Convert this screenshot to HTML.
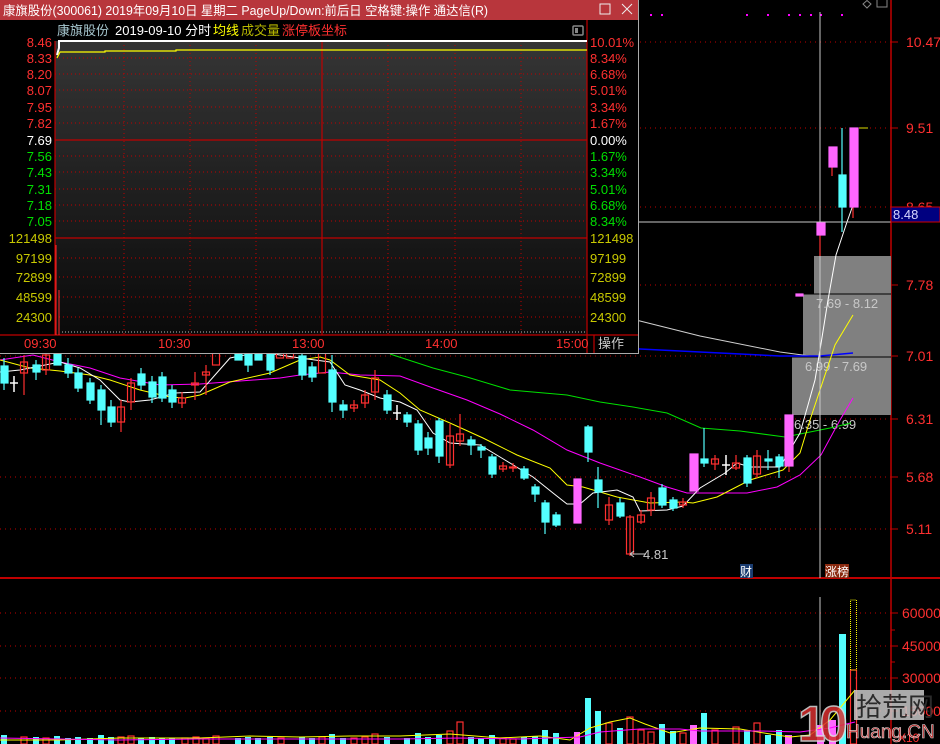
<!DOCTYPE html>
<html><head><meta charset="utf-8"><style>
html,body{margin:0;padding:0;background:#000;width:940px;height:744px;overflow:hidden}
svg{display:block}
text{font-family:"Liberation Sans","Noto Sans CJK SC",sans-serif}
</style></head><body>
<svg width="940" height="744" viewBox="0 0 940 744" xmlns="http://www.w3.org/2000/svg">
<rect width="940" height="744" fill="#000"/>
<g stroke="#c00000" stroke-width="1" stroke-dasharray="1,4">
<line x1="0" y1="42" x2="891" y2="42"/><line x1="0" y1="128" x2="891" y2="128"/>
<line x1="0" y1="207" x2="891" y2="207"/><line x1="0" y1="285" x2="891" y2="285"/>
<line x1="0" y1="356" x2="891" y2="356"/><line x1="0" y1="419" x2="891" y2="419"/>
<line x1="0" y1="477" x2="891" y2="477"/><line x1="0" y1="529" x2="891" y2="529"/>
<line x1="0" y1="613" x2="891" y2="613"/><line x1="0" y1="646" x2="891" y2="646"/>
<line x1="0" y1="678" x2="891" y2="678"/><line x1="0" y1="711" x2="891" y2="711"/>
</g>
<line x1="891" y1="0" x2="891" y2="744" stroke="#c00000" stroke-width="1.5"/>
<line x1="0" y1="578" x2="940" y2="578" stroke="#c00000" stroke-width="2"/>
<g stroke="#c00000"><line x1="891" y1="42" x2="898" y2="42"/><line x1="891" y1="128" x2="898" y2="128"/><line x1="891" y1="285" x2="898" y2="285"/><line x1="891" y1="356" x2="898" y2="356"/><line x1="891" y1="419" x2="898" y2="419"/><line x1="891" y1="477" x2="898" y2="477"/><line x1="891" y1="529" x2="898" y2="529"/><line x1="891" y1="613" x2="898" y2="613"/><line x1="891" y1="630" x2="895" y2="630"/><line x1="891" y1="646" x2="898" y2="646"/><line x1="891" y1="662" x2="895" y2="662"/><line x1="891" y1="678" x2="898" y2="678"/><line x1="891" y1="711" x2="898" y2="711"/></g>
<g fill="#ff3030" font-size="14">
<text x="906" y="47">10.47</text><text x="906" y="133">9.51</text><text x="906" y="212">8.65</text>
<text x="906" y="290">7.78</text><text x="906" y="361">7.01</text><text x="906" y="424">6.31</text>
<text x="906" y="482">5.68</text><text x="906" y="534">5.11</text>
<text x="902" y="618">60000</text><text x="902" y="651">45000</text><text x="902" y="683">30000</text><text x="902" y="716">15000</text>
<text x="898" y="742" font-size="12">X10</text>
</g>
<line x1="859" y1="128" x2="868" y2="128" stroke="#dddd00"/>
<line x1="886" y1="285" x2="891" y2="285" stroke="#00ff00"/>
<g fill="#ff00ff"><rect x="650" y="14" width="2" height="2"/><rect x="661" y="14" width="2" height="2"/><rect x="746" y="14" width="2" height="2"/><rect x="767" y="14" width="2" height="2"/><rect x="788" y="14" width="2" height="2"/><rect x="799" y="14" width="2" height="2"/><rect x="810" y="14" width="2" height="2"/><rect x="820" y="14" width="2" height="2"/><rect x="841" y="14" width="2" height="2"/></g>
<path d="M863 4 L867 0.5 L871 4 L867 8Z" fill="none" stroke="#888"/>
<rect x="877" y="-2" width="10" height="9" fill="none" stroke="#888"/>
<rect x="814" y="256" width="77" height="38" fill="#808080"/>
<rect x="803" y="294" width="88" height="63" fill="#808080"/>
<rect x="792" y="357" width="99" height="58" fill="#808080"/>
<line x1="803" y1="294" x2="891" y2="294" stroke="#000"/>
<line x1="792" y1="357" x2="891" y2="357" stroke="#000"/>
<g fill="#c8c8c8" font-size="13"><text x="816" y="308">7.69 - 8.12</text><text x="805" y="371">6.99 - 7.69</text><text x="794" y="429">6.35 - 6.99</text></g>
<polyline points="600,312 640,321 700,336 780,352 810,356" fill="none" stroke="#d0d0d0"/>
<polyline points="600,347 640,349 700,352 780,356 820,356 853,353" fill="none" stroke="#0000ff" stroke-width="1.5"/>
<polyline points="390,354 433,368 467,377 510,390 567,395 600,402 633,407 667,413 701,428 740,431 785,437 800,434 830,428 851,423" fill="none" stroke="#00e000"/>
<polyline points="0,360 33,355 60,362 90,368 120,378 160,385 200,384 240,381 280,378 300,375 330,372 360,375 400,376 433,388 467,400 500,414 533,430 567,450 600,463 640,477 667,487 687,493 747,493 777,487 800,475 821,455 840,420 853,398" fill="none" stroke="#ff00ff"/>
<polyline points="0,360 30,368 60,371 90,375 110,380 140,390 170,397 185,398 200,395 230,382 270,373 300,360 320,357 330,360 350,375 380,380 400,393 420,410 450,423 483,438 517,455 550,468 567,485 583,487 617,497 650,503 683,502 693,503 717,497 750,480 783,470 800,453 810,420 820,390 835,345 853,315" fill="none" stroke="#ffff00"/>
<polyline points="0,372 20,370 40,366 60,362 80,368 100,380 120,400 130,402 150,400 175,393 200,392 215,375 230,358 260,352 300,358 315,360 330,362 345,385 360,390 380,398 400,402 417,410 433,433 450,443 480,445 500,457 533,477 553,493 567,504 580,504 593,493 617,490 633,497 640,511 667,510 683,506 700,488 725,473 737,463 750,467 780,467 800,433 808,405 815,380 820,350 828,300 836,255 847,222 853,205" fill="none" stroke="#ffffff"/>
<line x1="0" y1="222" x2="891" y2="222" stroke="#c8c8c8"/>
<line x1="820" y1="12" x2="820" y2="578" stroke="#c8c8c8"/>
<line x1="820" y1="597" x2="820" y2="744" stroke="#c8c8c8"/>
<rect x="891" y="207" width="49" height="15" fill="#000080" stroke="#d00000"/>
<text x="893" y="219" fill="#d8d8ff" font-size="13">8.48</text>
<g stroke-width="1.2">
<g stroke="#54ffff" fill="#54ffff">
<line x1="4" y1="358" x2="4" y2="390"/><rect x="1" y="366" width="7" height="17"/>
<line x1="36" y1="360" x2="36" y2="380"/><rect x="33" y="365" width="7" height="7"/>
<rect x="54" y="353" width="7" height="12"/>
<line x1="68" y1="358" x2="68" y2="378"/><rect x="65" y="365" width="7" height="8"/>
<line x1="78" y1="368" x2="78" y2="392"/><rect x="75" y="373" width="7" height="15"/>
<line x1="90" y1="378" x2="90" y2="404"/><rect x="87" y="383" width="7" height="17"/>
<line x1="101" y1="385" x2="101" y2="425"/><rect x="98" y="390" width="7" height="20"/>
<line x1="111" y1="400" x2="111" y2="427"/><rect x="108" y="407" width="7" height="15"/>
<line x1="141" y1="368" x2="141" y2="390"/><rect x="138" y="374" width="7" height="11"/>
<line x1="152" y1="376" x2="152" y2="403"/><rect x="149" y="382" width="7" height="15"/>
<line x1="162" y1="372" x2="162" y2="402"/><rect x="159" y="377" width="7" height="21"/>
<line x1="172" y1="385" x2="172" y2="408"/><rect x="169" y="390" width="7" height="12"/>
<rect x="235" y="353" width="7" height="7"/>
<line x1="248" y1="353" x2="248" y2="372"/><rect x="245" y="353" width="7" height="12"/>
<rect x="255" y="350" width="7" height="10"/>
<line x1="270" y1="353" x2="270" y2="375"/><rect x="267" y="353" width="7" height="17"/>
<line x1="302" y1="352" x2="302" y2="380"/><rect x="299" y="356" width="7" height="19"/>
<line x1="312" y1="362" x2="312" y2="382"/><rect x="309" y="367" width="7" height="10"/>
<line x1="332" y1="355" x2="332" y2="412"/><rect x="329" y="370" width="7" height="32"/>
<line x1="343" y1="400" x2="343" y2="418"/><rect x="340" y="405" width="7" height="5"/>
<line x1="387" y1="390" x2="387" y2="414"/><rect x="384" y="395" width="7" height="15"/>
<line x1="407" y1="412" x2="407" y2="427"/><rect x="404" y="415" width="7" height="7"/>
<line x1="418" y1="420" x2="418" y2="455"/><rect x="415" y="424" width="7" height="26"/>
<line x1="428" y1="432" x2="428" y2="455"/><rect x="425" y="438" width="7" height="10"/>
<line x1="439" y1="418" x2="439" y2="463"/><rect x="436" y="421" width="7" height="35"/>
<line x1="471" y1="436" x2="471" y2="455"/><rect x="468" y="440" width="7" height="5"/>
<line x1="481" y1="444" x2="481" y2="458"/><rect x="478" y="447" width="7" height="3"/>
<line x1="492" y1="454" x2="492" y2="478"/><rect x="489" y="457" width="7" height="17"/>
<line x1="524" y1="466" x2="524" y2="480"/><rect x="521" y="469" width="7" height="9"/>
<line x1="535" y1="484" x2="535" y2="502"/><rect x="532" y="487" width="7" height="7"/>
<line x1="545" y1="500" x2="545" y2="534"/><rect x="542" y="503" width="7" height="19"/>
<line x1="556" y1="512" x2="556" y2="527"/><rect x="553" y="515" width="7" height="10"/>
<line x1="588" y1="425" x2="588" y2="462"/><rect x="585" y="427" width="7" height="25"/>
<line x1="598" y1="467" x2="598" y2="508"/><rect x="595" y="480" width="7" height="12"/>
<line x1="620" y1="498" x2="620" y2="518"/><rect x="617" y="503" width="7" height="13"/>
<line x1="662" y1="484" x2="662" y2="508"/><rect x="659" y="488" width="7" height="17"/>
<line x1="673" y1="497" x2="673" y2="511"/><rect x="670" y="500" width="7" height="8"/>
<line x1="704" y1="428" x2="704" y2="467"/><rect x="701" y="459" width="7" height="4"/>
<line x1="747" y1="455" x2="747" y2="487"/><rect x="744" y="458" width="7" height="25"/>
<line x1="768" y1="450" x2="768" y2="470"/><rect x="765" y="459" width="7" height="2"/>
<line x1="779" y1="454" x2="779" y2="478"/><rect x="776" y="457" width="7" height="9"/>
<line x1="842" y1="128" x2="842" y2="232"/><rect x="839" y="175" width="7" height="32"/>
</g>
<g stroke="#ff3030" fill="none">
<line x1="24" y1="355" x2="24" y2="395"/><rect x="20.5" y="362" width="7" height="11"/>
<line x1="46" y1="352" x2="46" y2="375"/><rect x="42.5" y="355" width="7" height="15"/>
<line x1="121" y1="400" x2="121" y2="432"/><rect x="117.5" y="407" width="7" height="15"/>
<line x1="131" y1="378" x2="131" y2="410"/><rect x="127.5" y="383" width="7" height="19"/>
<line x1="182" y1="392" x2="182" y2="408"/><rect x="178.5" y="398" width="7" height="5"/>
<line x1="195" y1="372" x2="195" y2="400"/><rect x="191.5" y="383" width="7" height="2"/>
<line x1="206" y1="365" x2="206" y2="395"/><rect x="202.5" y="372" width="7" height="3"/>
<rect x="212.5" y="353" width="7" height="12"/>
<rect x="276.5" y="353" width="7" height="5"/><rect x="286.5" y="353" width="7" height="5"/>
<rect x="318.5" y="353" width="7" height="20"/>
<rect x="350.5" y="405" width="7" height="3"/><line x1="354" y1="400" x2="354" y2="412"/>
<line x1="365" y1="390" x2="365" y2="408"/><rect x="361.5" y="395" width="7" height="8"/>
<line x1="375" y1="370" x2="375" y2="400"/><rect x="371.5" y="378" width="7" height="14"/>
<line x1="450" y1="424" x2="450" y2="468"/><rect x="446.5" y="436" width="7" height="29"/>
<line x1="460" y1="414" x2="460" y2="446"/><rect x="456.5" y="434" width="7" height="7"/>
<line x1="503" y1="462" x2="503" y2="472"/><rect x="499.5" y="466" width="7" height="3"/>
<line x1="513" y1="463" x2="513" y2="472"/><rect x="509.5" y="467" width="7" height="1"/>
<line x1="609" y1="497" x2="609" y2="525"/><rect x="605.5" y="505" width="7" height="15"/>
<line x1="630" y1="515" x2="630" y2="556"/><rect x="626.5" y="517" width="7" height="37"/>
<line x1="641" y1="510" x2="641" y2="524"/><rect x="637.5" y="515" width="7" height="7"/>
<line x1="651" y1="492" x2="651" y2="516"/><rect x="647.5" y="498" width="7" height="12"/>
<line x1="683" y1="498" x2="683" y2="508"/><rect x="679.5" y="502" width="7" height="3"/>
<line x1="715" y1="455" x2="715" y2="470"/><rect x="711.5" y="459" width="7" height="5"/>
<line x1="736" y1="455" x2="736" y2="470"/><rect x="732.5" y="463" width="7" height="5"/>
<line x1="757" y1="450" x2="757" y2="478"/><rect x="753.5" y="456" width="7" height="18"/>
<line x1="789" y1="466" x2="789" y2="472"/>
<line x1="820" y1="235" x2="820" y2="256"/>
<line x1="832" y1="167" x2="832" y2="176"/>
<line x1="853" y1="207" x2="853" y2="218"/>
</g>
<g fill="#ff66ff" stroke="#ff66ff">
<rect x="574" y="479" width="7" height="44"/>
<rect x="690" y="454" width="8" height="37"/>
<rect x="785" y="415" width="8" height="51"/>
<rect x="796" y="294" width="7" height="2"/>
<rect x="817" y="223" width="8" height="12"/>
<rect x="829" y="147" width="8" height="20"/>
<rect x="850" y="128" width="8" height="79"/>
</g>
<g stroke="#fff" stroke-width="1.5">
<line x1="14" y1="376" x2="14" y2="392"/><line x1="10" y1="383" x2="18" y2="383"/>
<line x1="397" y1="405" x2="397" y2="420"/><line x1="393" y1="413" x2="401" y2="413"/>
<line x1="726" y1="455" x2="726" y2="475"/><line x1="722" y1="465" x2="730" y2="465"/>
</g>
</g>
<path d="M630 554 L646 554 M630 554 L634 551 M630 554 L634 557" stroke="#c8c8c8" fill="none"/>
<text x="643" y="559" fill="#c8c8c8" font-size="13">4.81</text>
<rect x="740" y="564" width="13" height="14" fill="#1a3c70"/>
<text x="740" y="576" fill="#fff" font-size="12">财</text>
<rect x="825" y="564" width="24" height="14" fill="#8a2a10"/>
<text x="825" y="576" fill="#fff" font-size="12">涨榜</text>
<g fill="#54ffff">
<rect x="1" y="735" width="6" height="9"/><rect x="33" y="737" width="6" height="7"/><rect x="54" y="736" width="6" height="8"/><rect x="65" y="738" width="6" height="6"/><rect x="75" y="737" width="6" height="7"/><rect x="87" y="738" width="6" height="6"/><rect x="98" y="735" width="6" height="9"/><rect x="108" y="737" width="6" height="7"/><rect x="138" y="738" width="6" height="6"/><rect x="149" y="737" width="6" height="7"/><rect x="159" y="738" width="6" height="6"/><rect x="169" y="738" width="6" height="6"/><rect x="235" y="738" width="6" height="6"/><rect x="245" y="737" width="6" height="7"/><rect x="255" y="738" width="6" height="6"/><rect x="267" y="737" width="6" height="7"/><rect x="299" y="737" width="6" height="7"/><rect x="309" y="738" width="6" height="6"/><rect x="329" y="734" width="6" height="10"/><rect x="340" y="738" width="6" height="6"/><rect x="384" y="737" width="6" height="7"/><rect x="404" y="738" width="6" height="6"/><rect x="415" y="733" width="6" height="11"/><rect x="425" y="737" width="6" height="7"/><rect x="436" y="735" width="6" height="9"/><rect x="468" y="737" width="6" height="7"/><rect x="478" y="738" width="6" height="6"/><rect x="489" y="735" width="6" height="9"/><rect x="521" y="737" width="6" height="7"/><rect x="532" y="736" width="6" height="8"/><rect x="542" y="730" width="6" height="14"/><rect x="553" y="733" width="6" height="11"/><rect x="585" y="698" width="6" height="46"/><rect x="595" y="711" width="6" height="33"/><rect x="617" y="728" width="6" height="16"/><rect x="659" y="724" width="6" height="20"/><rect x="670" y="731" width="6" height="13"/><rect x="701" y="713" width="6" height="31"/><rect x="744" y="730" width="6" height="14"/><rect x="765" y="735" width="6" height="9"/><rect x="776" y="730" width="6" height="14"/><rect x="839" y="634" width="7" height="110"/>
</g>
<g fill="none" stroke="#ff3030" stroke-width="1.2">
<rect x="21" y="737" width="6" height="7"/><rect x="43" y="738" width="6" height="6"/><rect x="118" y="737" width="6" height="7"/><rect x="128" y="736" width="6" height="8"/><rect x="182" y="738" width="6" height="6"/><rect x="193" y="737" width="6" height="7"/><rect x="203" y="738" width="6" height="6"/><rect x="213" y="736" width="6" height="8"/><rect x="278" y="738" width="6" height="6"/><rect x="319" y="737" width="6" height="7"/><rect x="351" y="738" width="6" height="6"/><rect x="362" y="737" width="6" height="7"/><rect x="372" y="734" width="6" height="10"/><rect x="447" y="731" width="6" height="13"/><rect x="457" y="722" width="6" height="22"/><rect x="500" y="738" width="6" height="6"/><rect x="510" y="739" width="6" height="5"/><rect x="606" y="723" width="6" height="21"/><rect x="627" y="717" width="6" height="27"/><rect x="638" y="730" width="6" height="14"/><rect x="648" y="732" width="6" height="12"/><rect x="680" y="733" width="6" height="11"/><rect x="712" y="730" width="6" height="14"/><rect x="733" y="727" width="6" height="17"/><rect x="754" y="723" width="6" height="21"/><rect x="850.5" y="670" width="6" height="74"/>
</g>
<g fill="#ff66ff"><rect x="574" y="732" width="6" height="12"/><rect x="690" y="725" width="7" height="19"/><rect x="785" y="735" width="7" height="9"/><rect x="817" y="725" width="7" height="19"/><rect x="829" y="720" width="7" height="24"/></g>
<rect x="850.5" y="600" width="6" height="70" fill="none" stroke="#ffff00" stroke-dasharray="1,1"/>
<polyline points="0,740 60,740 120,738 200,738 250,736 300,737 350,736 400,736 450,734 500,738 540,736 570,740 590,728 610,722 630,718 645,724 670,733 700,728 740,729 770,734 790,737 810,735 830,720 855,690" fill="none" stroke="#ffff00"/>
<polyline points="0,738 60,739 120,740 200,739 300,739 400,739 460,738 520,739 580,737 600,732 640,729 680,729 700,731 760,731 800,732 830,728 855,722" fill="none" stroke="#ff00ff"/>
<g opacity="0.85">
<text x="798" y="741" font-size="50" font-weight="bold" fill="#d83030" stroke="#ddd" stroke-width="1.5" letter-spacing="-6">10</text>
<rect x="854" y="690" width="70" height="30" fill="#c8c8c8"/>
<text x="856" y="716" font-size="26" fill="#333">拾荒网</text>
<text x="846" y="738" font-size="19" fill="#d83030" stroke="#fff" stroke-width="0.6">Huang.CN</text>
</g>
<!-- popup -->
<rect x="0" y="0" width="639" height="354" fill="#000"/>
<rect x="0" y="0" width="638" height="20" fill="#b8363c"/>
<text x="3" y="15" fill="#fff" font-size="12.5" textLength="485" lengthAdjust="spacingAndGlyphs">康旗股份(300061) 2019年09月10日 星期二 PageUp/Down:前后日 空格键:操作 通达信(R)</text>
<rect x="600" y="4" width="10" height="10" fill="none" stroke="#eee"/>
<path d="M622 4 L632 14 M632 4 L622 14" stroke="#eee"/>
<text x="57" y="35" fill="#a8c8d0" font-size="13">康旗股份</text>
<text x="115" y="35" fill="#fff" font-size="13">2019-09-10 分时</text>
<text x="213" y="35" fill="#ffff00" font-size="13">均线</text>
<text x="241" y="35" fill="#b8b800" font-size="13">成交量</text>
<text x="282" y="35" fill="#ff3030" font-size="13">涨停板坐标</text>
<rect x="573" y="26" width="10" height="9" rx="1" fill="none" stroke="#888" stroke-width="1.5"/><rect x="575" y="28" width="3" height="5" fill="#888"/>
<defs><linearGradient id="g" x1="0" y1="0" x2="0" y2="1"><stop offset="0" stop-color="#353535"/><stop offset="1" stop-color="#0a0a0a"/></linearGradient></defs>
<rect x="55" y="41" width="532" height="294" fill="url(#g)"/>
<g stroke="#c00000" stroke-dasharray="1,3">
<line x1="55" y1="58" x2="587" y2="58"/><line x1="55" y1="74" x2="587" y2="74"/><line x1="55" y1="90" x2="587" y2="90"/><line x1="55" y1="107" x2="587" y2="107"/><line x1="55" y1="123" x2="587" y2="123"/>
<line x1="55" y1="156" x2="587" y2="156"/><line x1="55" y1="172" x2="587" y2="172"/><line x1="55" y1="189" x2="587" y2="189"/><line x1="55" y1="205" x2="587" y2="205"/><line x1="55" y1="221" x2="587" y2="221"/>
<line x1="55" y1="258" x2="587" y2="258"/><line x1="55" y1="277" x2="587" y2="277"/><line x1="55" y1="297" x2="587" y2="297"/><line x1="55" y1="317" x2="587" y2="317"/>
<line x1="124" y1="41" x2="124" y2="335"/><line x1="190" y1="41" x2="190" y2="335"/><line x1="256" y1="41" x2="256" y2="335"/><line x1="388" y1="41" x2="388" y2="335"/><line x1="455" y1="41" x2="455" y2="335"/><line x1="521" y1="41" x2="521" y2="335"/>
</g>
<g stroke="#c00000" stroke-width="1.2">
<line x1="55" y1="140" x2="587" y2="140"/><line x1="55" y1="238" x2="587" y2="238"/><line x1="322" y1="41" x2="322" y2="335"/>
<line x1="55" y1="41" x2="55" y2="335"/><line x1="587" y1="20" x2="587" y2="353"/><line x1="0" y1="335" x2="639" y2="335"/>
<line x1="594" y1="335" x2="594" y2="353"/>
</g>
<polyline points="57,55 59,48 59,41 587,41" fill="none" stroke="#fff" stroke-width="2"/>
<polyline points="57,58 60,52 105,52 105,51 176,51 176,50 587,50" fill="none" stroke="#ffff00" stroke-width="1.2"/>
<line x1="56" y1="245" x2="56" y2="335" stroke="#ff3030"/><line x1="59" y1="290" x2="59" y2="335" stroke="#ff3030"/>
<line x1="62" y1="332" x2="587" y2="332" stroke="#bbb" stroke-dasharray="1,2"/>
<g font-size="13" fill="#ff3030" text-anchor="end">
<text x="52" y="47">8.46</text><text x="52" y="63">8.33</text><text x="52" y="79">8.20</text><text x="52" y="95">8.07</text><text x="52" y="112">7.95</text><text x="52" y="128">7.82</text>
<text x="52" y="145" fill="#fff">7.69</text>
<text x="52" y="161" fill="#00e000">7.56</text><text x="52" y="177" fill="#00e000">7.43</text><text x="52" y="194" fill="#00e000">7.31</text><text x="52" y="210" fill="#00e000">7.18</text><text x="52" y="226" fill="#00e000">7.05</text>
<text x="52" y="243" fill="#c8c800">121498</text><text x="52" y="263" fill="#c8c800">97199</text><text x="52" y="282" fill="#c8c800">72899</text><text x="52" y="302" fill="#c8c800">48599</text><text x="52" y="322" fill="#c8c800">24300</text>
</g>
<g font-size="13" fill="#ff3030">
<text x="590" y="47">10.01%</text><text x="590" y="63">8.34%</text><text x="590" y="79">6.68%</text><text x="590" y="95">5.01%</text><text x="590" y="112">3.34%</text><text x="590" y="128">1.67%</text>
<text x="590" y="145" fill="#fff">0.00%</text>
<text x="590" y="161" fill="#00e000">1.67%</text><text x="590" y="177" fill="#00e000">3.34%</text><text x="590" y="194" fill="#00e000">5.01%</text><text x="590" y="210" fill="#00e000">6.68%</text><text x="590" y="226" fill="#00e000">8.34%</text>
<text x="590" y="243" fill="#c8c800">121498</text><text x="590" y="263" fill="#c8c800">97199</text><text x="590" y="282" fill="#c8c800">72899</text><text x="590" y="302" fill="#c8c800">48599</text><text x="590" y="322" fill="#c8c800">24300</text>
</g>
<g font-size="13" fill="#ff3030"><text x="24" y="348">09:30</text><text x="158" y="348">10:30</text><text x="292" y="348">13:00</text><text x="425" y="348">14:00</text><text x="556" y="348">15:00</text></g>
<text x="598" y="348" font-size="13" fill="#ccc">操作</text>
<line x1="0" y1="353.5" x2="639" y2="353.5" stroke="#aaa"/>
<line x1="638.5" y1="0" x2="638.5" y2="354" stroke="#aaa"/>
</svg>
</body></html>
